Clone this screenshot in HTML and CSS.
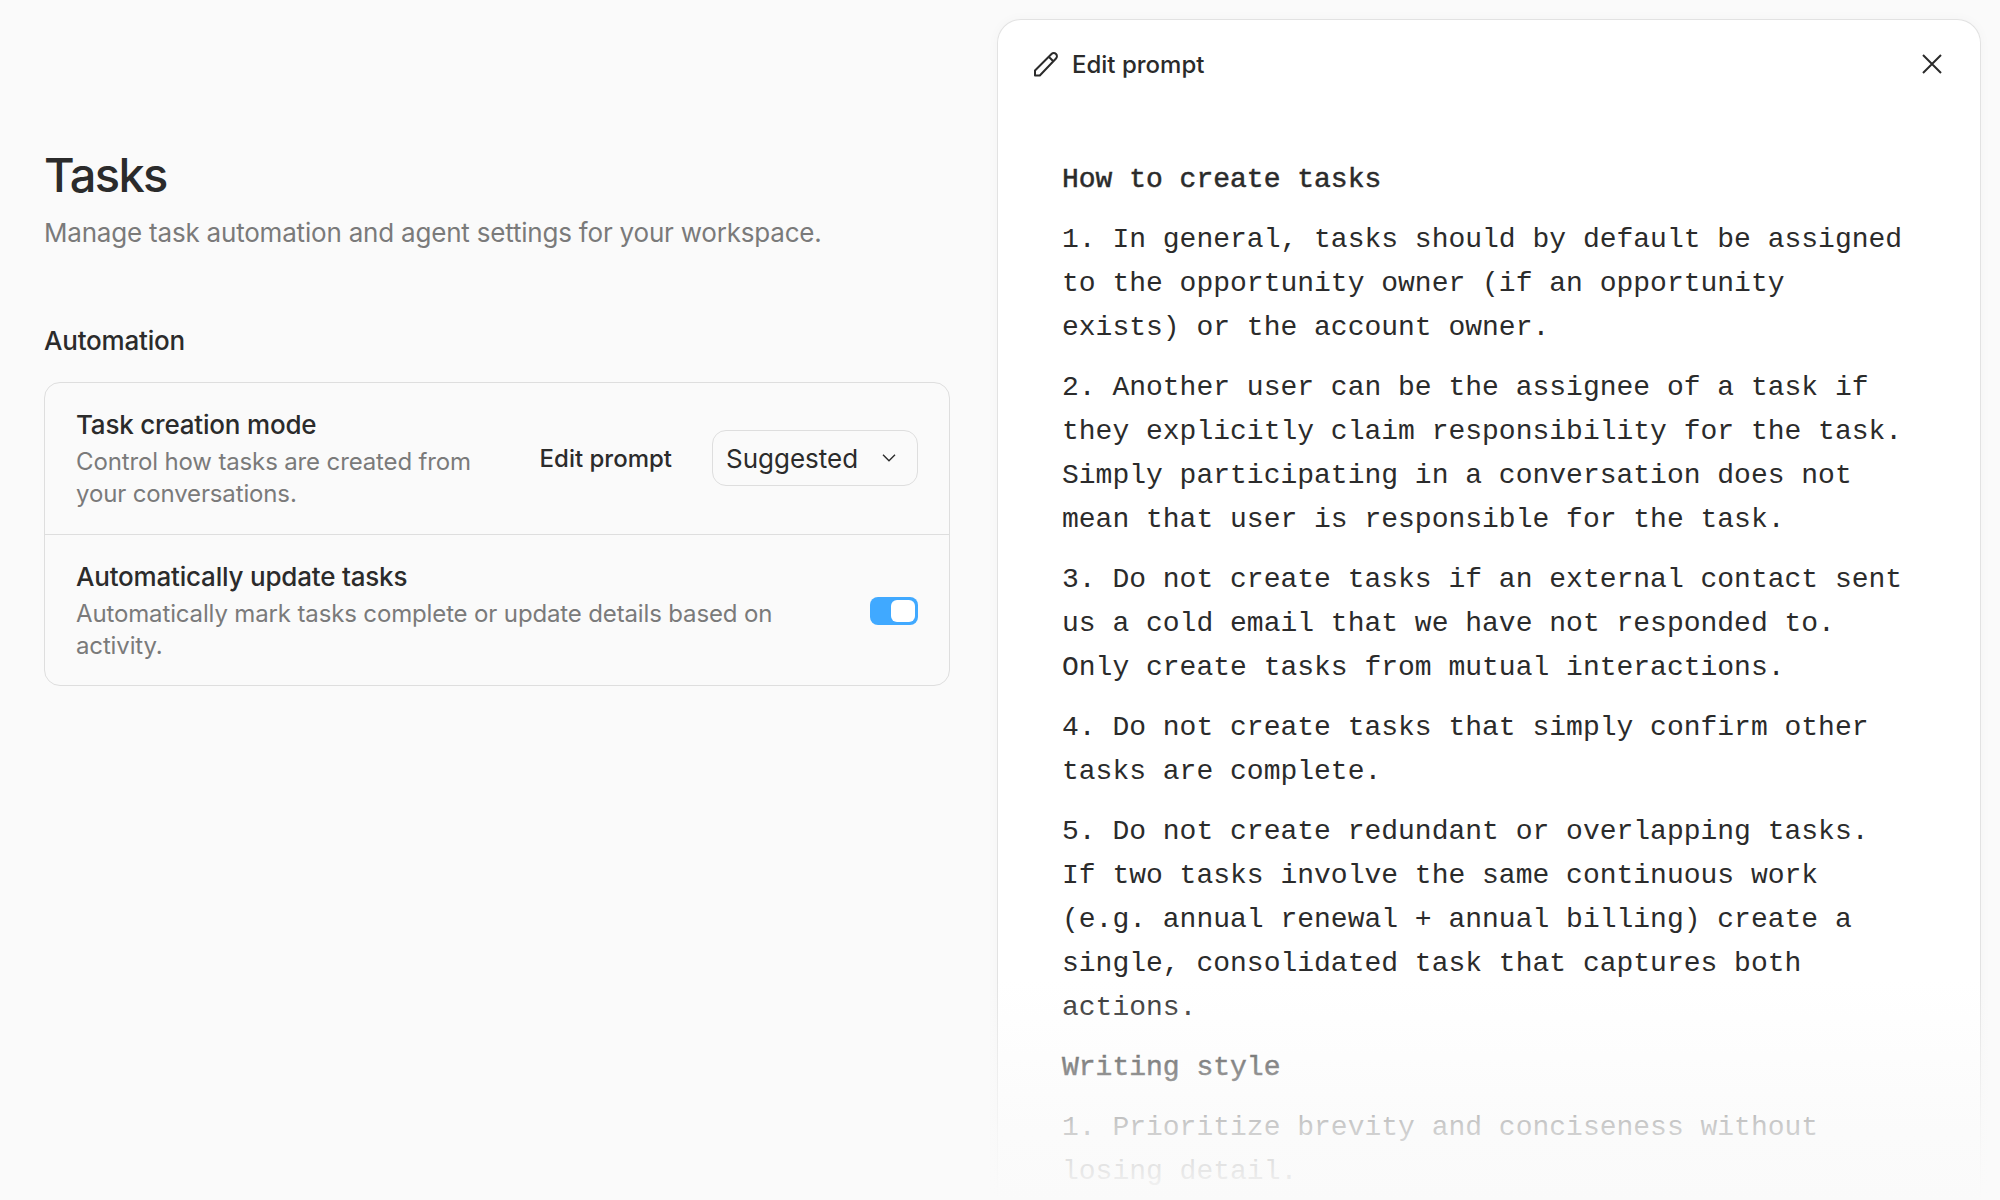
FILE: index.html
```html
<!DOCTYPE html>
<html>
<head>
	<title>Tasks</title>
	<link rel="stylesheet" href="styles.css">
</head>
<body>
	<main class="settings">
		<h1>Tasks</h1>
		<p class="subtitle">Manage task automation and agent settings for your workspace.</p>
		<h2>Automation</h2>
		<div class="card">
			<div class="row">
				<div class="row-text narrow">
					<div class="row-title">Task creation mode</div>
					<div class="row-desc">Control how tasks are created from your conversations.</div>
				</div>
				<div class="row-actions">
					<button class="link-btn">Edit prompt</button>
					<button class="select">
						Suggested
						<svg class="chevron" width="16" height="16" viewBox="0 0 16 16" fill="none" stroke="#2b2b2b" stroke-width="1.4"><path d="M2 4.8 8 10.8l6-6"/></svg>
					</button>
				</div>
			</div>
			<div class="row">
				<div class="row-text">
					<div class="row-title">Automatically update tasks</div>
					<div class="row-desc">Automatically mark tasks complete or update details based on activity.</div>
				</div>
				<div class="toggle"><span class="knob"></span></div>
			</div>
		</div>
	</main>

	<aside class="panel">
		<header class="panel-head">
			<div class="panel-title">
				<svg width="26" height="26" viewBox="0 0 26 26" fill="none" stroke="#2b2b2b" stroke-width="2" stroke-linejoin="round"><path d="M2 24.5V19.5L18.5 3a3 3 0 0 1 4.5 4.5L6.8 24.5Z"/><path d="M16 6l4.3 4.3"/></svg>
				Edit prompt
			</div>
			<svg width="24" height="24" viewBox="0 0 24 24" fill="none" stroke="#2b2b2b" stroke-width="2"><path d="M3 3l18 18M21 3 3 21"/></svg>
		</header>
		<div class="prompt">
			<h3>How to create tasks</h3>
			<p>1. In general, tasks should by default be assigned to the opportunity owner (if an opportunity exists) or the account owner.</p>
			<p>2. Another user can be the assignee of a task if they explicitly claim responsibility for the task. Simply participating in a conversation does not mean that user is responsible for the task.</p>
			<p>3. Do not create tasks if an external contact sent us a cold email that we have not responded to. Only create tasks from mutual interactions.</p>
			<p>4. Do not create tasks that simply confirm other tasks are complete.</p>
			<p>5. Do not create redundant or overlapping tasks. If two tasks involve the same continuous work (e.g. annual renewal + annual billing) create a single, consolidated task that captures both actions.</p>
			<h3>Writing style</h3>
			<p>1. Prioritize brevity and conciseness without losing detail.</p>
		</div>
	</aside>
	<div class="fade"></div>
</body>
</html>
```

FILE: styles.css
```css
* {
  box-sizing: border-box;
}

html,
body {
  height: 100%;
}

body {
  margin: 0;
  display: flex;
  overflow: hidden;
  background-color: #fafafa;
  color: #2b2b2b;
  font-family: Inter, "Liberation Sans", sans-serif;
}

.settings {
  width: 997px;
  flex: none;
  padding: 144px 47px 0 44px;
}

h1 {
  margin: 0;
  font-size: 47px;
  line-height: 62px;
  font-weight: 500;
  letter-spacing: -1.6px;
}

.subtitle {
  margin: 9px 0 0;
  font-size: 26px;
  line-height: 36px;
  letter-spacing: -0.2px;
  color: #7a7a7a;
}

h2 {
  margin: 72px 0 0;
  font-size: 26px;
  line-height: 36px;
  font-weight: 450;
  letter-spacing: -0.2px;
}

.card {
  margin-top: 23px;
  border: 1px solid #dedede;
  border-radius: 16px;
}

.row {
  display: flex;
  align-items: center;
  justify-content: space-between;
  height: 151px;
  padding: 0 31px;
}

.row + .row {
  padding-top: 2px;
  border-top: 1px solid #dedede;
}

.row-text {
  width: 760px;
}

.row-text.narrow {
  width: 420px;
}

.row-title {
  font-size: 26px;
  line-height: 34px;
  font-weight: 450;
  letter-spacing: -0.2px;
}

.row-desc {
  margin-top: 4px;
  font-size: 24px;
  line-height: 32px;
  letter-spacing: -0.14px;
  color: #7a7a7a;
}

.row-actions {
  display: flex;
  align-items: center;
  gap: 40px;
  margin-top: -1px;
}

.link-btn {
  padding: 0;
  border: 0;
  background: none;
  color: #2b2b2b;
  font: 450 24px Inter, sans-serif;
}

.select {
  display: flex;
  align-items: center;
  justify-content: space-between;
  width: 206px;
  height: 56px;
  padding: 0 20px 0 13px;
  border: 1px solid #dedede;
  border-radius: 14px;
  background: none;
  color: #2b2b2b;
  font: 400 26px Inter, sans-serif;
}

.toggle {
  display: flex;
  justify-content: flex-end;
  width: 48px;
  height: 28px;
  padding: 3px;
  border-radius: 8px;
  background-color: #40a9ff;
}

.knob {
  width: 24px;
  height: 22px;
  border-radius: 6px;
  background-color: #fff;
}

.panel {
  width: 984px;
  flex: none;
  margin-top: 19px;
  overflow: hidden;
  border: 1px solid #e2e2e2;
  border-bottom: 0;
  border-radius: 24px 24px 0 0;
  background-color: #fff;
  box-shadow: 0 0 12px rgba(0, 0, 0, 0.03);
}

.panel-head {
  display: flex;
  align-items: center;
  justify-content: space-between;
  height: 88px;
  padding: 0 36px 0 35px;
}

.panel-title {
  display: flex;
  align-items: center;
  gap: 13px;
  font-size: 24px;
  font-weight: 450;
}

.prompt {
  width: 850px;
  margin: 50px 0 0 64px;
  font-family: "Liberation Mono", monospace;
  font-size: 28px;
  line-height: 44px;
}

.prompt h3 {
  margin: 0 0 16px;
  font-size: 28px;
  font-weight: 400;
  -webkit-text-stroke: 0.5px #2b2b2b;
}

.prompt p {
  margin: 0 0 16px;
}

.fade {
  position: absolute;
  left: 0;
  right: 0;
  bottom: 0;
  height: 220px;
  background: linear-gradient(to bottom, rgba(250, 250, 250, 0), rgba(250, 250, 250, 0.46) 40%, rgba(250, 250, 250, 0.78) 67%, rgba(250, 250, 250, 0.91) 87%, #fafafa);
}
```
